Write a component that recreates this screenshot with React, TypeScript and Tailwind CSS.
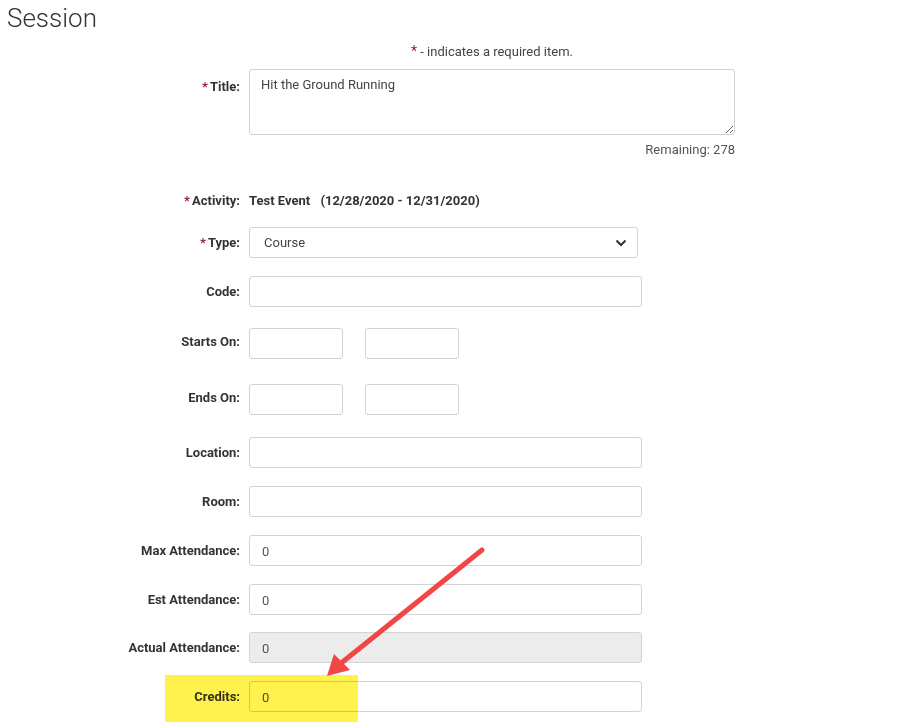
import type { ReactNode } from "react";

type RowProps = {
  label: string;
  required?: boolean;
  top?: boolean;
  raised?: boolean;
  className?: string;
  children: ReactNode;
};

function Row({ label, required, top, raised, className = "", children }: RowProps) {
  return (
    <div className={`flex ${top ? "items-start" : "items-center"} ${className}`}>
      <div
        className={`w-[240px] shrink-0 text-right font-bold text-[#333] ${
          top ? "pt-[10px]" : raised ? "pb-[4px]" : "pt-[1px]"
        }`}
      >
        {required && <span className="mr-[2px] text-[#9b1c3a]">*</span>}
        {label}
      </div>
      <div className="ml-[9px]">{children}</div>
    </div>
  );
}

function TextInput({
  value = "",
  width = "w-[393px]",
  disabled = false,
}: {
  value?: string;
  width?: string;
  disabled?: boolean;
}) {
  return (
    <input
      type="text"
      defaultValue={value}
      disabled={disabled}
      className={`${width} h-[31px] rounded-[3px] border border-[#d3d3d3] px-[12px] pt-[1px] text-[13px] text-[#555] outline-none ${
        disabled ? "bg-[#ececec]" : "bg-white"
      }`}
    />
  );
}

export default function App() {
  return (
    <div
      className="relative min-h-[722px] w-full bg-white text-[13px] leading-[16px] text-[#333]"
      style={{ fontFamily: "Roboto, 'Liberation Sans', sans-serif" }}
    >
      <h1 className="pl-[7px] pt-[3px] text-[26px] font-light leading-[30px] text-[#333]">
        Session
      </h1>

      <div className="mt-[11px] flex h-[16px]">
        <div className="ml-[249px] w-[486px] text-center text-[#444]">
          <span className="text-[14px] leading-none text-[#9b1c3a]">*</span> - indicates a required item.
        </div>
      </div>

      {/* Title */}
      <Row label="Title:" required top className="mt-[9px]">
        <textarea
          defaultValue="Hit the Ground Running"
          className="block h-[66px] w-[486px] rounded-[3px] border border-[#d3d3d3] px-[11px] py-[7px] text-[13px] leading-[16px] text-[#444] outline-none"
        />
      </Row>
      <div className="mt-[7px] flex">
        <div className="ml-[249px] w-[486px] text-right text-[#555]">Remaining: 278</div>
      </div>

      {/* Activity */}
      <Row label="Activity:" required className="mt-[34px]">
        <span className="font-bold text-[#333]">
          Test Event <span className="ml-[7px]">(12/28/2020 - 12/31/2020)</span>
        </span>
      </Row>

      {/* Type */}
      <Row label="Type:" required className="mt-[18px]">
        <div className="relative">
          <select
            defaultValue="Course"
            className="h-[31px] w-[389px] appearance-none rounded-[3px] border border-[#d3d3d3] bg-white pl-[14px] text-[13px] text-[#444] outline-none"
          >
            <option>Course</option>
            <option>Workshop</option>
            <option>Lecture</option>
          </select>
          <svg
            className="pointer-events-none absolute right-[11px] top-[12px]"
            width="12"
            height="8"
            viewBox="0 0 12 8"
          >
            <path d="M1.5 1.5 L6 6 L10.5 1.5" fill="none" stroke="#333" strokeWidth="2" />
          </svg>
        </div>
      </Row>

      <Row label="Code:" className="mt-[18px]">
        <TextInput />
      </Row>

      <Row label="Starts On:" raised className="mt-[21px]">
        <div className="flex gap-[22px]">
          <TextInput width="w-[94px]" />
          <TextInput width="w-[94px]" />
        </div>
      </Row>

      <Row label="Ends On:" raised className="mt-[25px]">
        <div className="flex gap-[22px]">
          <TextInput width="w-[94px]" />
          <TextInput width="w-[94px]" />
        </div>
      </Row>

      <Row label="Location:" className="mt-[22px]">
        <TextInput />
      </Row>

      <Row label="Room:" className="mt-[18px]">
        <TextInput />
      </Row>

      <Row label="Max Attendance:" className="mt-[18px]">
        <TextInput value="0" />
      </Row>

      <Row label="Est Attendance:" className="mt-[18px]">
        <TextInput value="0" />
      </Row>

      <Row label="Actual Attendance:" className="mt-[17px]">
        <TextInput value="0" disabled />
      </Row>

      <Row label="Credits:" className="mt-[18px] pb-[10px]">
        <TextInput value="0" />
      </Row>

      {/* highlight over the credits field */}
      <div className="pointer-events-none absolute left-[165px] top-[675px] h-[47px] w-[193px] bg-[#fff24f] mix-blend-multiply" />

      {/* annotation arrow */}
      <svg
        className="pointer-events-none absolute left-0 top-0"
        width="915"
        height="722"
        viewBox="0 0 915 722"
      >
        <line
          x1="482"
          y1="550"
          x2="340"
          y2="664"
          stroke="#f24545"
          strokeWidth="5"
          strokeLinecap="round"
        />
        <polygon points="327,676 334,654 350,670" fill="#f24545" />
      </svg>
    </div>
  );
}
